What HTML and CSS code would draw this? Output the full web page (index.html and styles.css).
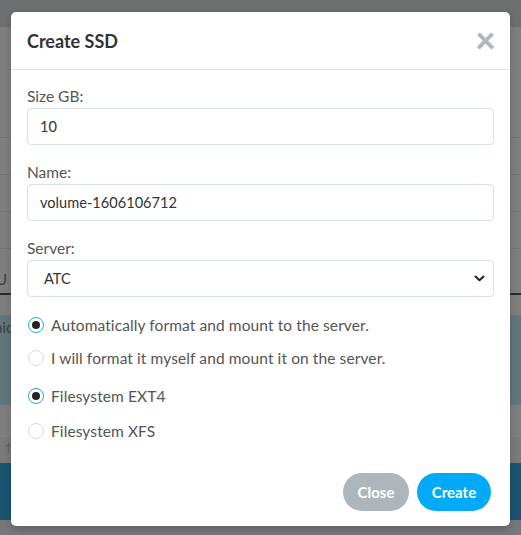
FILE: index.html
```html
<!DOCTYPE html>
<html>
<head>
<meta charset="utf-8">
<link rel="stylesheet" href="styles.css">
</head>
<body>
<div class="page">
  <div class="pg-top"></div>
  <div class="pg-row"></div>
  <div class="pg-row short"></div>
  <div class="pg-row short"></div>
  <div class="pg-row short"></div>
  <div class="pg-tab">U (</div>
  <div class="pg-gap"></div>
  <div class="pg-teal">nic</div>
  <div class="pg-gap2"></div>
  <div class="pg-arrow">&#8593;</div>
  <div class="pg-blue"></div>
</div>

<div class="modal">
  <div class="modal-header">
    <h4 class="modal-title">Create SSD</h4>
    <span class="close-x">&times;</span>
  </div>
  <div class="modal-body">
    <div class="field">
      <label class="label">Size GB:</label>
      <div class="input">10</div>
    </div>
    <div class="field">
      <label class="label">Name:</label>
      <div class="input">volume-1606106712</div>
    </div>
    <div class="field">
      <label class="label">Server:</label>
      <div class="input select">
        <span class="select-val">ATC</span>
        <svg class="chev" width="11" height="7" viewBox="0 0 11 7"><path d="M1.5 1.5 L5.5 5.3 L9.5 1.5" fill="none" stroke="#222" stroke-width="2" stroke-linecap="round" stroke-linejoin="round"/></svg>
      </div>
    </div>
    <div class="radios">
      <div class="radio-row"><span class="radio on"></span><span class="rtext">Automatically format and mount to the server.</span></div>
      <div class="radio-row"><span class="radio"></span><span class="rtext">I will format it myself and mount it on the server.</span></div>
    </div>
    <div class="radios second">
      <div class="radio-row"><span class="radio on"></span><span class="rtext">Filesystem EXT4</span></div>
      <div class="radio-row"><span class="radio"></span><span class="rtext">Filesystem XFS</span></div>
    </div>
  </div>
  <div class="modal-footer">
    <button class="btn btn-close">Close</button>
    <button class="btn btn-create">Create</button>
  </div>
</div>
</body>
</html>
```

FILE: styles.css
```css
html, body {
  margin: 0;
  padding: 0;
}
body {
  width: 521px;
  height: 535px;
  overflow: hidden;
  background: #76777a;
  font-family: "Lato", "Liberation Sans", sans-serif;
  position: relative;
}
.page {
  display: flex;
  flex-direction: column;
  width: 521px;
  background: #7f7f7f;
  color: #3a3f42;
  font-size: 15px;
}
.pg-top { height: 27px; background: #6e6f71; }
.pg-row { height: 110px; border-bottom: 1px solid #737373; }
.pg-row.short { height: 36px; }
.pg-tab { height: 44px; line-height: 60px; border-bottom: 2px solid #2a2a2a; text-indent: -4px; }
.pg-gap { height: 20px; }
.pg-teal { height: 90px; background: #61767c; line-height: 24px; text-indent: -6px; }
.pg-gap2 { height: 32px; background: #7f7f7f; }
.pg-arrow { height: 26px; background: #7a7a7a; font-size: 11px; color: #5e5e5e; text-indent: 4px; line-height: 22px; }
.pg-blue { height: 57px; background: #1c5470; }

.modal {
  position: absolute;
  left: 11px;
  top: 12px;
  width: 499px;
  height: 514px;
  background: #fff;
  border-radius: 5px;
  display: flex;
  flex-direction: column;
  box-shadow: 0 3px 8px rgba(0,0,0,0.2);
}
.modal-header {
  height: 57px;
  border-bottom: 1px solid #dfe8ec;
  display: flex;
  align-items: center;
  justify-content: space-between;
  padding: 0 14px 0 16px;
}
.modal-title {
  margin: 0;
  font-size: 18px;
  font-weight: 700;
  color: #333;
}
.close-x {
  font-size: 36px;
  font-weight: 900;
  color: #afb7bc;
  line-height: 1;
  margin-top: -4px;
}
.modal-body {
  padding: 16px 16px 0 16px;
  flex: 1;
}
.field { margin-bottom: 17px; }
.label {
  display: block;
  font-size: 15.5px;
  color: #555;
  line-height: 20px;
  margin-bottom: 2px;
}
.input {
  height: 35px;
  border: 1px solid #d5e1e7;
  border-radius: 4px;
  padding: 0 12px;
  display: flex;
  align-items: center;
  font-size: 14.6px;
  color: #333;
}
.select { justify-content: space-between; padding: 0 8px 0 16px; }
.chev { display: block; }
.radios { display: flex; flex-direction: column; gap: 17px; padding-top: 3px; }
.radios.second { padding-top: 22px; gap: 19px; }
.radio-row { display: flex; align-items: center; gap: 7px; height: 16px; }
.radio {
  width: 14px;
  height: 14px;
  border: 1px solid #cfdde4;
  border-radius: 50%;
  box-sizing: content-box;
  position: relative;
  margin-left: 1px;
}
.radio.on { border-color: #1ea7f2; }
.radio.on::after {
  content: "";
  position: absolute;
  left: 3px; top: 3px;
  width: 8px; height: 8px;
  border-radius: 50%;
  background: #222;
}
.rtext { font-size: 15.5px; color: #555; letter-spacing: 0.1px; }
.modal-footer {
  display: flex;
  justify-content: flex-end;
  gap: 8px;
  padding: 0 19px 15px 0;
}
.btn {
  border: none;
  height: 38px;
  border-radius: 19px;
  color: #fff;
  font-family: inherit;
  font-size: 15px;
  font-weight: 700;
  padding: 0 10px;
}
.btn-close { background: #adb6ba; width: 66px; }
.btn-create { background: #00aaf8; width: 74px; }
```
